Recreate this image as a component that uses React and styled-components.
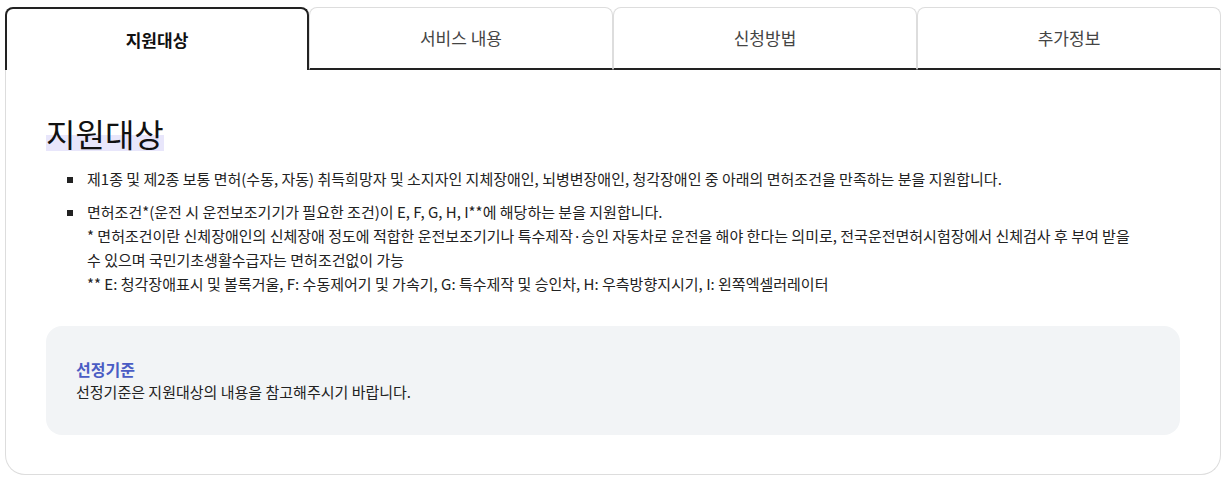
import styled, { createGlobalStyle } from "styled-components";

const GlobalStyle = createGlobalStyle`
    body {
        margin: 0;
        background: #fff;
        font-family: "Noto Sans CJK KR", "Noto Sans", sans-serif;
        color: #222;
    }
`;

const Wrap = styled.div`
    padding: 7px 9px 8px 5px;
`;

const TabBar = styled.div`
    display: grid;
    grid-template-columns: repeat(4, 1fr);
    height: 63px;
`;

const Tab = styled.button`
    font-family: inherit;
    font-size: 17px;
    font-weight: ${(p) => (p.$active ? 700 : 400)};
    color: ${(p) => (p.$active ? "#111" : "#444")};
    background: #fff;
    border: ${(p) => (p.$active ? "2px solid #222" : "1px solid #ddd")};
    border-bottom: ${(p) => (p.$active ? "none" : "2px solid #222")};
    border-radius: 8px 8px 0 0;
    padding: 0 0 ${(p) => (p.$active ? "0" : "1px")};
    cursor: pointer;
`;

const Panel = styled.div`
    border: 1px solid #ddd;
    border-top: none;
    border-radius: 0 0 20px 20px;
    padding: 43px 40px 39px 40px;
`;

const Title = styled.h2`
    display: inline-block;
    margin: 0 0 14px;
    font-size: 32px;
    font-weight: 400;
    line-height: 40px;
    color: #111;
    background: linear-gradient(transparent 55%, #e8e6fb 55%, #e8e6fb 95%, transparent 95%);
`;

const List = styled.ul`
    margin: 0 0 30px;
    padding: 0 40px 0 41px;
    list-style: none;
`;

const Item = styled.li`
    position: relative;
    font-size: 15px;
    line-height: 24px;
    color: #222;
    & + & {
        margin-top: 9px;
    }
    &::before {
        content: "";
        position: absolute;
        left: -20px;
        top: 10px;
        width: 6px;
        height: 6px;
        background: #222;
    }
`;

const Note = styled.p`
    margin: 0;
`;

const InfoBox = styled.div`
    background: #f2f4f6;
    border-radius: 16px;
    padding: 31px 30px 32px;
`;

const InfoTitle = styled.h3`
    margin: 0;
    font-size: 16px;
    font-weight: 700;
    line-height: 24px;
    color: #4a5cc4;
`;

const InfoText = styled.p`
    margin: 0;
    font-size: 15px;
    line-height: 22px;
    color: #222;
`;

const tabs = ["지원대상", "서비스 내용", "신청방법", "추가정보"];

export default function App() {
    return (
        <Wrap>
            <GlobalStyle />
            <TabBar>
                {tabs.map((t, i) => (
                    <Tab key={t} $active={i === 0}>{t}</Tab>
                ))}
            </TabBar>
            <Panel>
                <Title>지원대상</Title>
                <List>
                    <Item>제1종 및 제2종 보통 면허(수동, 자동) 취득희망자 및 소지자인 지체장애인, 뇌병변장애인, 청각장애인 중 아래의 면허조건을 만족하는 분을 지원합니다.</Item>
                    <Item>
                        면허조건*(운전 시 운전보조기기가 필요한 조건)이 E, F, G, H, I**에 해당하는 분을 지원합니다.
                        <Note>* 면허조건이란 신체장애인의 신체장애 정도에 적합한 운전보조기기나 특수제작·승인 자동차로 운전을 해야 한다는 의미로, 전국운전면허시험장에서 신체검사 후 부여 받을 수 있으며 국민기초생활수급자는 면허조건없이 가능</Note>
                        <Note>** E: 청각장애표시 및 볼록거울, F: 수동제어기 및 가속기, G: 특수제작 및 승인차, H: 우측방향지시기, I: 왼쪽엑셀러레이터</Note>
                    </Item>
                </List>
                <InfoBox>
                    <InfoTitle>선정기준</InfoTitle>
                    <InfoText>선정기준은 지원대상의 내용을 참고해주시기 바랍니다.</InfoText>
                </InfoBox>
            </Panel>
        </Wrap>
    );
}
